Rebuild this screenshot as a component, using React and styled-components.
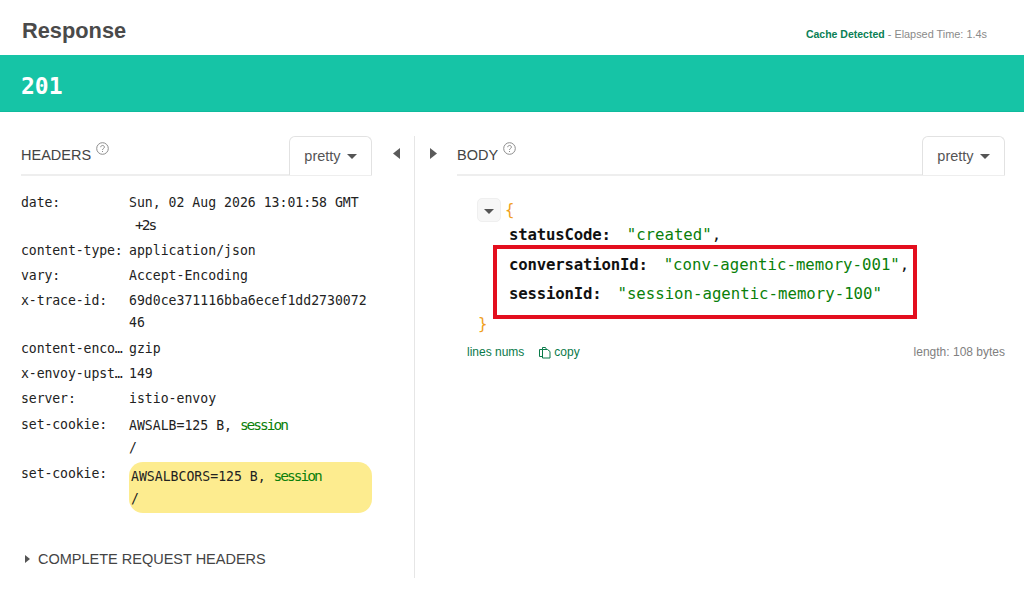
import React from "react";
import styled, { createGlobalStyle } from "styled-components";

const mono = `"DejaVu Sans Mono", "Liberation Mono", monospace`;
const sans = `"Liberation Sans", Arial, sans-serif`;

const GlobalStyle = createGlobalStyle`
	html, body {
		margin: 0;
		padding: 0;
		background: #fff;
	}
	body {
		font-family: ${sans};
		overflow: hidden;
	}
`;

const Page = styled.div`
	width: 1024px;
	height: 597px;
	overflow: hidden;
`;

const TopRow = styled.div`
	height: 55px;
	padding: 0 37px 0 22px;
	display: flex;
	justify-content: space-between;
	align-items: center;
	box-sizing: border-box;
`;

const Title = styled.h2`
	margin: 7px 0 0;
	font-size: 21.8px;
	font-weight: 700;
	color: #4a4a4a;
`;

const Timing = styled.div`
	font-size: 10.9px;
	margin-top: 13px;
	color: #8a8a8a;
`;

const CacheLabel = styled.span`
	font-size: 10.5px;
	color: #0a7f55;
	font-weight: 700;
`;

const StatusBar = styled.div`
	height: 57px;
	box-sizing: border-box;
	background: #16c4a6;
	border-bottom: 1px solid #10bb9d;
	padding: 5px 21px 0;
	display: flex;
	align-items: center;
	color: #fff;
	font-family: ${mono};
	font-size: 23px;
	font-weight: 700;
`;

const Panes = styled.div`
	display: flex;
	padding: 24px 19px 0 21px;
`;

const HeaderPane = styled.section`
	width: 351px;
	flex: none;
`;

const BodyPane = styled.section`
	flex: 1;
	min-width: 0;
`;

const Splitter = styled.div`
	width: 85px;
	flex: none;
	height: 442px;
	display: flex;
	justify-content: center;
	gap: 11px;
`;

const Divider = styled.div`
	width: 1px;
	background: #e6e6e6;
`;

const ArrowButton = styled.div`
	width: 14px;
	height: 34px;
	display: flex;
	align-items: center;
	justify-content: center;
	svg {
		display: block;
		fill: #5a5a5a;
	}
`;

const TabBar = styled.div`
	height: 38px;
	display: flex;
	justify-content: space-between;
	border-bottom: 2px solid #eeeeee;
`;

const TabLabel = styled.div`
	display: flex;
	font-size: 14.5px;
	color: #444;
	padding-top: 11px;
	line-height: 16px;
	svg {
		display: block;
		margin: -5px 0 0 5px;
		stroke: #8c8c8c;
		fill: none;
	}
`;

const PrettyTab = styled.div`
	width: 83px;
	height: 39px;
	box-sizing: border-box;
	border: 1px solid #e2e2e2;
	border-bottom: none;
	border-radius: 6px 6px 0 0;
	display: flex;
	align-items: center;
	justify-content: center;
	gap: 6px;
	font-size: 14.5px;
	color: #555;
	background: #fff;
	padding-bottom: 1px;
`;

const Caret = styled.span`
	width: 0;
	height: 0;
	margin-top: 2px;
	border-left: 5px solid transparent;
	border-right: 5px solid transparent;
	border-top: 5px solid #555;
`;

const HeaderList = styled.div`
	padding-top: 14px;
	font-family: ${mono};
	font-size: 13.17px;
	line-height: 22px;
	color: #222;
`;

const HeaderRow = styled.div`
	display: grid;
	grid-template-columns: 108px 1fr;
	padding: 1.65px 0;
	margin-top: ${(p) => (p.$marked ? "1px" : "0")};
`;

const HeaderKey = styled.div`
	overflow: hidden;
	white-space: nowrap;
	text-overflow: ellipsis;
	padding-right: 1px;
	letter-spacing: -0.1px;
`;

const HeaderValue = styled.div`
	word-break: break-all;
	width: 243px;
	background: ${(p) => (p.$marked ? "#fdec8f" : "transparent")};
	border-radius: ${(p) => (p.$marked ? "14px" : "0")};
	padding: ${(p) => (p.$marked ? "3px 2px" : "0")};
	margin-top: ${(p) => (p.$marked ? "-1px" : "0")};
	box-sizing: border-box;
`;

const Narrow = styled.span`
	font-size: 14.5px;
	letter-spacing: -2px;
	color: ${(p) => p.$color || "#222"};
`;

const AddOn = styled(Narrow)`
	margin-left: 6px;
`;

const CompleteHeaders = styled.div`
	margin-top: 36px;
	display: flex;
	align-items: center;
	font-size: 14.5px;
	color: #444;
	padding-left: 4px;
	gap: 8px;
`;

const SmallArrow = styled.span`
	width: 0;
	height: 0;
	border-top: 4px solid transparent;
	border-bottom: 4px solid transparent;
	border-left: 5px solid #555;
`;

const JsonBlock = styled.div`
	position: relative;
	padding: 24px 0 0 21px;
	font-family: ${mono};
	font-size: 15.7px;
	line-height: 29.5px;
	color: #111;
`;

const JsonLine = styled.div`
	display: flex;
	align-items: center;
	height: ${(p) => (p.$short ? "20px" : "29.5px")};
	padding-left: ${(p) => p.$indent || 0}px;
	white-space: pre;
`;

const Toggle = styled.div`
	width: 24px;
	height: 24px;
	flex: none;
	box-sizing: border-box;
	margin: 0 4px 0 -1px;
	border-radius: 5px;
	background: #f7f7f7;
	border: 1px solid #efefef;
	display: flex;
	align-items: center;
	justify-content: center;
`;

const JsonKey = styled.span`
	font-weight: 700;
	letter-spacing: -0.2px;
	margin-right: 16px;
`;

const JsonString = styled.span`
	color: #0a7f0a;
`;

const Brace = styled.span`
	color: #f0a020;
`;

const Annotation = styled.div`
	position: absolute;
	left: 36px;
	top: 69px;
	width: 424px;
	height: 74px;
	box-sizing: border-box;
	border: 4px solid #e30e1e;
	pointer-events: none;
`;

const BodyFooter = styled.div`
	margin-top: 7px;
	padding-left: 10px;
	display: flex;
	align-items: center;
	font-size: 12px;
	color: #0a7a4a;
`;

const CopyLink = styled.span`
	display: flex;
	align-items: center;
	gap: 2px;
	margin-left: 14px;
	svg {
		display: block;
		stroke: #0a7a4a;
		fill: none;
	}
`;

const Length = styled.span`
	margin-left: auto;
	color: #808080;
`;

function HelpIcon() {
	return (
		<svg width="13" height="13" viewBox="0 0 13 13" strokeWidth="1">
			<circle cx="6.5" cy="6.5" r="5.8" />
			<path d="M4.7 5.2c0-2.3 3.7-2.3 3.7-.1 0 1.4-1.9 1.4-1.9 2.9M6.5 9v1" />
		</svg>
	);
}

const headers = [
	{ key: "date:", value: <>Sun, 02 Aug 2026 13:01:58 GMT<br /><AddOn>+2s</AddOn></> },
	{ key: "content-type:", value: "application/json" },
	{ key: "vary:", value: "Accept-Encoding" },
	{ key: "x-trace-id:", value: "69d0ce371116bba6ecef1dd273007246" },
	{ key: "content-encoding:", value: "gzip" },
	{ key: "x-envoy-upstream-service-time:", value: "149" },
	{ key: "server:", value: "istio-envoy" },
	{ key: "set-cookie:", value: <>AWSALB=125 B, <Narrow $color="#0a7f0a">session</Narrow><br />/</> },
	{ key: "set-cookie:", marked: true, value: <>AWSALBCORS=125 B, <Narrow $color="#0a7f0a">session</Narrow><br />/</> },
];

export default function App() {
	return (
		<Page>
			<GlobalStyle />
			<TopRow>
				<Title>Response</Title>
				<Timing>
					<CacheLabel>Cache Detected</CacheLabel> - Elapsed Time: 1.4s
				</Timing>
			</TopRow>
			<StatusBar>201</StatusBar>
			<Panes>
				<HeaderPane>
					<TabBar>
						<TabLabel>HEADERS <HelpIcon /></TabLabel>
						<PrettyTab>pretty <Caret /></PrettyTab>
					</TabBar>
					<HeaderList>
						{headers.map((h, i) => (
							<HeaderRow key={i} $marked={h.marked}>
								<HeaderKey>{h.key}</HeaderKey>
								<HeaderValue $marked={h.marked}>{h.value}</HeaderValue>
							</HeaderRow>
						))}
					</HeaderList>
					<CompleteHeaders><SmallArrow />COMPLETE REQUEST HEADERS</CompleteHeaders>
				</HeaderPane>
				<Splitter>
					<ArrowButton>
						<svg width="7" height="11" viewBox="0 0 7 11"><path d="M7 0v11L0 5.5z" /></svg>
					</ArrowButton>
					<Divider />
					<ArrowButton>
						<svg width="7" height="11" viewBox="0 0 7 11"><path d="M0 0v11l7-5.5z" /></svg>
					</ArrowButton>
				</Splitter>
				<BodyPane>
					<TabBar>
						<TabLabel>BODY <HelpIcon /></TabLabel>
						<PrettyTab>pretty <Caret /></PrettyTab>
					</TabBar>
					<JsonBlock>
						<JsonLine $short>
							<Toggle><Caret /></Toggle>
							<Brace>{"{"}</Brace>
						</JsonLine>
						<JsonLine $indent={31}>
							<JsonKey>statusCode:</JsonKey><JsonString>"created"</JsonString>,
						</JsonLine>
						<JsonLine $indent={31}>
							<JsonKey>conversationId:</JsonKey><JsonString>"conv-agentic-memory-001"</JsonString>,
						</JsonLine>
						<JsonLine $indent={31}>
							<JsonKey>sessionId:</JsonKey><JsonString>"session-agentic-memory-100"</JsonString>
						</JsonLine>
						<JsonLine $indent={0}>
							<Brace>{"}"}</Brace>
						</JsonLine>
						<Annotation />
					</JsonBlock>
					<BodyFooter>
						lines nums
						<CopyLink>
							<svg width="14" height="13" viewBox="0 0 14 13" strokeWidth="1">
								<path d="M4.5 3.500V1.500h3l1 2M4.500 3.500h-3v7h3" />
								<path d="M4.500 3.500h5l2.500 2v6.500H4.500z" />
							</svg>
							copy
						</CopyLink>
						<Length>length: 108 bytes</Length>
					</BodyFooter>
				</BodyPane>
			</Panes>
		</Page>
	);
}
